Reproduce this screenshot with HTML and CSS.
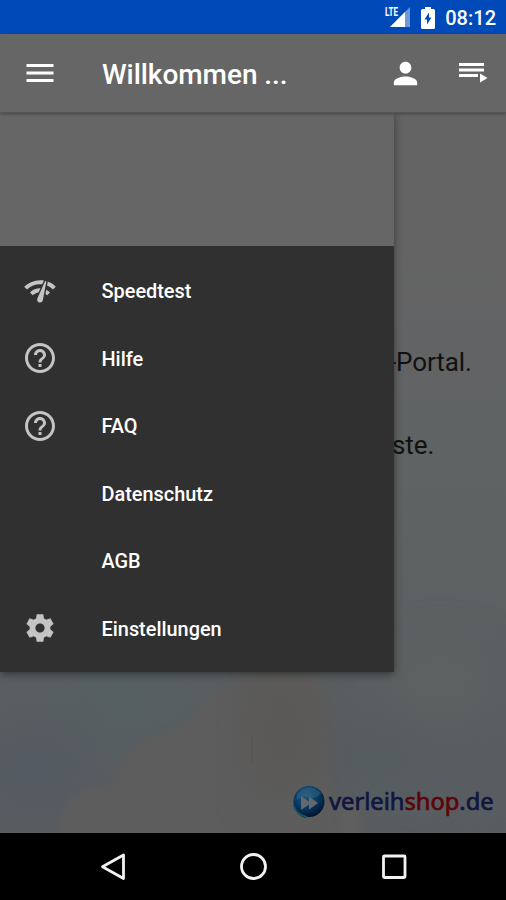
FILE: index.html
```
<!DOCTYPE html>
<html lang="de">
<head>
    <meta charset="UTF-8">
    <meta name="viewport" content="width=device-width, initial-scale=1.0">
    <title>verleihshop.de</title>
    <link rel="stylesheet" href="styles.css">
</head>
<body>
    <div class="statusbar">
        <svg class="signal" width="28" height="24" viewBox="0 0 28 24">
            <path d="M25 2v20H5z" fill="#6f98dc"/>
            <path d="M20 7v15H5z" fill="#fff"/>
            <text class="lte" x="0" y="11" textLength="13" lengthAdjust="spacingAndGlyphs">LTE</text>
        </svg>
        <svg class="battery" width="14" height="22" viewBox="0 0 14 22">
            <path d="M4 0h6v2h2.500q1.500 0 1.500 1.500v17q0 1.500-1.500 1.500h-11q-1.500 0-1.500-1.500v-17q0-1.500 1.500-1.500H4z" fill="#fff"/>
            <path d="M8 5.500v5h2.500L6 17.500v-5H3.500z" fill="#0049b9"/>
        </svg>
        <span class="clock">08:12</span>
    </div>

    <header class="appbar">
        <svg class="icon" viewBox="0 0 24 24"><path d="M3 18h18v-2H3v2zm0-5h18v-2H3v2zm0-7v2h18V6H3z"/></svg>
        <h1 class="title">Willkommen ...</h1>
        <svg class="icon account" viewBox="0 0 24 24"><path d="M12 12c2.210 0 4-1.790 4-4s-1.790-4-4-4-4 1.790-4 4 1.790 4 4 4zm0 2c-2.670 0-8 1.340-8 4v2h16v-2c0-2.660-5.330-4-8-4z"/></svg>
        <svg class="playlist" width="30" height="24" viewBox="0 0 30 24">
            <path d="M1 2h25v3H1zM1 7.500h25v3H1zM1 13h19v3H1zM22 12.500l7.500 4.500-7.500 4.500z"/>
        </svg>
    </header>

    <main class="content">
        <!-- sky with clouds -->
        <svg class="sky" viewBox="0 0 506 721" preserveAspectRatio="none">
            <defs>
                <linearGradient id="skyFill" x1="0" y1="0" x2="0" y2="1">
                    <stop offset="0.2" stop-color="#646464"/>
                    <stop offset="0.5" stop-color="#5f6364"/>
                    <stop offset="0.75" stop-color="#5a6061"/>
                    <stop offset="1" stop-color="#585d61"/>
                </linearGradient>
                <filter id="soft" x="-20%" y="-20%" width="140%" height="140%" color-interpolation-filters="sRGB"><feGaussianBlur stdDeviation="3"/></filter>
                <filter id="wide" x="-50%" y="-50%" width="200%" height="200%" color-interpolation-filters="sRGB"><feGaussianBlur stdDeviation="22"/></filter>
            </defs>
            <rect width="506" height="721" fill="url(#skyFill)"/>
            <g filter="url(#wide)">
                <ellipse cx="35" cy="655" rx="60" ry="45" fill="#555b62"/>
                <ellipse cx="125" cy="595" rx="65" ry="35" fill="#565f62"/>
                <ellipse cx="375" cy="640" rx="50" ry="30" fill="#565d5f"/>
                <ellipse cx="440" cy="570" rx="50" ry="35" fill="#5d6161"/>
                <ellipse cx="490" cy="665" rx="40" ry="45" fill="#595d61"/>
            </g>
            <g filter="url(#soft)">
                <path d="M58 735v-22l10-25 20-11 28-6 6-22 14-18 26-10 24-10 20-26 28-13 16-12h62l12 20 3 75 10 32 14 48z" fill="#5d5d5d"/>
            </g>
            <g filter="url(#wide)">
                <path d="M250 570l35-10 26 15 8 60-16 35-40 12-12-40z" fill="#5a5856"/>
            </g>
            <path d="M338 692l20-2 4 35h-18z" fill="#605f5e" filter="url(#soft)"/>
            <path d="M252 624v26" stroke="#504f4e" stroke-width="2" opacity="0.35"/>
        </svg>

        <div class="welcome">
            <p>-Portal.</p>
            <p>ste.</p>
        </div>

        <div class="brand">
            <svg width="34" height="36" viewBox="0 0 34 36">
                <defs>
                    <radialGradient id="ball" cx="0.4" cy="0.3" r="0.7">
                        <stop offset="0" stop-color="#1d557c"/>
                        <stop offset="0.55" stop-color="#073c63"/>
                        <stop offset="1" stop-color="#03152f"/>
                    </radialGradient>
                </defs>
                <path d="M4 9C-1 19 2 30 13 34l5-2L6 17z" fill="#15465c"/>
                <circle cx="17" cy="17.500" r="15.500" fill="url(#ball)"/>
                <path d="M5 10Q17-3 29 9q-5 7-13 4-6-2-11 3z" fill="#477593" opacity="0.35"/>
                <path d="M1.500 21Q4 30 15 33" fill="none" stroke="#17516a" stroke-width="1.500"/>
                <path d="M9 12l8 5.500V12.500l9 6.500-9 6.500v-5L9 26z" fill="#65696b"/>
            </svg>
            <div class="wordmark">verleih<span class="red">shop</span>.de</div>
        </div>

        <nav class="drawer">
            <div class="drawer-header"></div>
            <ul class="menu">
                <li>
                    <svg class="icon" viewBox="-0.500 -0.500 25 25"><path d="M15.900 5c-.17 0-.32.090-.41.230l-.07.150-5.180 11.650c-.16.290-.26.610-.26.960 0 1.110.9 2.010 2.010 2.010.96 0 1.770-.68 1.960-1.590l.010-.03L16.400 5.500c0-.28-.22-.5-.5-.5zM1 9l2 2c2.880-2.880 6.790-4.080 10.530-3.620l1.190-2.680C9.890 3.840 4.740 5.270 1 9zm20 2 2-2c-1.640-1.640-3.550-2.820-5.590-3.570l-.53 2.820c1.500.62 2.900 1.530 4.120 2.750zm-4 4 2-2c-.8-.8-1.700-1.420-2.660-1.890l-.55 2.920c.42.270.83.590 1.210.970zM5 13l2 2c1.130-1.130 2.560-1.790 4.030-2l1.280-2.880c-2.630-.08-5.300.87-7.310 2.880z"/></svg>
                    <span>Speedtest</span>
                </li>
                <li>
                    <svg class="icon" viewBox="0 0 24 24"><path d="M11 18h2v-2h-2v2zm1-16C6.480 2 2 6.480 2 12s4.480 10 10 10 10-4.480 10-10S17.520 2 12 2zm0 18c-4.410 0-8-3.590-8-8s3.590-8 8-8 8 3.590 8 8-3.590 8-8 8zm0-14c-2.210 0-4 1.790-4 4h2c0-1.100.9-2 2-2s2 .9 2 2c0 2-3 1.750-3 5h2c0-2.250 3-2.500 3-5 0-2.210-1.790-4-4-4z"/></svg>
                    <span>Hilfe</span>
                </li>
                <li>
                    <svg class="icon" viewBox="0 0 24 24"><path d="M11 18h2v-2h-2v2zm1-16C6.480 2 2 6.480 2 12s4.480 10 10 10 10-4.480 10-10S17.520 2 12 2zm0 18c-4.410 0-8-3.590-8-8s3.590-8 8-8 8 3.590 8 8-3.590 8-8 8zm0-14c-2.210 0-4 1.790-4 4h2c0-1.100.9-2 2-2s2 .9 2 2c0 2-3 1.750-3 5h2c0-2.250 3-2.500 3-5 0-2.210-1.790-4-4-4z"/></svg>
                    <span>FAQ</span>
                </li>
                <li>
                    <i class="icon"></i>
                    <span>Datenschutz</span>
                </li>
                <li>
                    <i class="icon"></i>
                    <span>AGB</span>
                </li>
                <li>
                    <svg class="icon" viewBox="-0.500 -0.500 25 25"><path d="M19.140 12.940c.04-.3.060-.61.060-.94 0-.32-.02-.64-.07-.94l2.030-1.580c.18-.14.230-.41.120-.61l-1.920-3.320c-.12-.22-.37-.29-.59-.22l-2.390.96c-.5-.38-1.030-.7-1.620-.94l-.36-2.540c-.04-.24-.24-.41-.48-.41h-3.840c-.24 0-.43.170-.47.410l-.36 2.540c-.59.240-1.130.570-1.620.940l-2.390-.96c-.22-.08-.47 0-.59.220L2.740 8.870c-.12.210-.08.470.12.610l2.030 1.580c-.05.300-.09.630-.09.940s.02.640.070.940l-2.030 1.580c-.18.140-.23.410-.12.610l1.920 3.320c.12.220.37.290.59.220l2.390-.96c.5.380 1.030.7 1.620.940l.36 2.540c.05.240.24.410.48.410h3.840c.24 0 .44-.17.470-.41l.36-2.540c.59-.24 1.130-.56 1.620-.94l2.390.96c.22.080.47 0 .59-.22l1.920-3.320c.12-.22.070-.47-.12-.61l-2.010-1.580zM12 15.200c-1.760 0-3.200-1.440-3.200-3.200s1.440-3.200 3.200-3.200 3.200 1.440 3.200 3.200-1.440 3.200-3.200 3.200z"/></svg>
                    <span>Einstellungen</span>
                </li>
            </ul>
        </nav>
    </main>

    <footer class="navbar">
        <svg width="28" height="30" viewBox="0 0 28 30"><path d="M23.500 3v23.500L2.500 14.700z"/></svg>
        <svg width="28" height="30" viewBox="0 0 28 30"><circle cx="13.500" cy="14.500" r="12"/></svg>
        <svg width="28" height="30" viewBox="0 0 28 30"><rect x="3.500" y="4" width="21.500" height="21.500" rx="1"/></svg>
    </footer>
</body>
</html>
```
FILE: styles.css
```
*, *::before, *::after {
    margin: 0;
    padding: 0;
    box-sizing: border-box;
}

body {
    display: flex;
    flex-direction: column;
    height: 900px;
    overflow: hidden;
    background-color: #000;
    color: #fff;
    font-family: Roboto, sans-serif;
}

svg {
    display: block;
    flex-shrink: 0;
}

.statusbar {
    display: flex;
    align-items: center;
    justify-content: flex-end;
    height: 34px;
    padding: 0 10px 0 0;
    background-color: #0049b9;
}

.signal {
    margin-right: 8px;
}

.lte {
    font-size: 12px;
    font-weight: 700;
    fill: #fff;
    stroke: #0049b9;
    stroke-width: 2px;
    paint-order: stroke;
}

.battery {
    margin-right: 10px;
    margin-top: 2px;
}

.clock {
    font-size: 20px;
    font-weight: 500;
    line-height: 34px;
    padding-top: 2px;
}

.appbar {
    position: relative;
    z-index: 2;
    display: flex;
    align-items: center;
    height: 79px;
    padding: 0 18px 0 22px;
    background-color: #666;
    border-bottom: 1px solid #555;
    box-shadow: 0 1px 3px rgba(0, 0, 0, 0.3);
}

.icon {
    width: 36px;
    height: 36px;
    fill: currentColor;
}

.title {
    flex: 1;
    margin-left: 44px;
    font-size: 28px;
    font-weight: 500;
    letter-spacing: -0.05px;
    padding-top: 3px;
}

.account {
    width: 35px;
    height: 35px;
    margin-right: 35px;
}

.playlist {
    fill: #fff;
}

.content {
    position: relative;
    display: flex;
    flex-direction: column;
    height: 720px;
    overflow: hidden;
    background-color: #646464;
}

.sky {
    position: absolute;
    inset: 0;
    width: 100%;
    height: 100%;
}

.welcome {
    position: relative;
    padding: 228px 0 0 389px;
    color: #111;
    font-size: 26px;
    letter-spacing: -0.1px;
    line-height: 42px;
}

.welcome p + p {
    margin-top: 41px;
    padding-left: 3px;
}

.brand {
    position: relative;
    display: flex;
    align-items: center;
    justify-content: flex-end;
    margin-top: auto;
    padding: 0 11px 13px 0;
}

.wordmark {
    width: 166px;
    margin-left: 3px;
    font-family: "Noto Sans", sans-serif;
    font-size: 23.7px;
    line-height: 32px;
    padding-bottom: 2px;
    white-space: nowrap;
    color: #10163f;
    -webkit-text-stroke: 0.7px currentColor;
}

.wordmark .red {
    color: #5c0508;
}

.drawer {
    position: absolute;
    top: 0;
    left: 0;
    width: 394px;
    background-color: #303030;
    box-shadow: 0 2px 8px rgba(0, 0, 0, 0.45);
}

.drawer-header {
    height: 133px;
    background-color: #666;
}

.menu {
    list-style: none;
    padding: 11px 0 10px;
}

.menu li {
    display: flex;
    align-items: center;
    height: 67.5px;
    padding-left: 22px;
    font-size: 19.9px;
    font-weight: 500;
}

.menu span {
    padding-top: 2px;
}

.menu .icon {
    color: #c4c4c4;
    margin-right: 43.5px;
}

.navbar {
    display: flex;
    align-items: center;
    justify-content: space-between;
    height: 67px;
    padding: 0 98px 0 100px;
    background-color: #000;
}

.navbar svg {
    fill: none;
    stroke: #f2f2f2;
    stroke-width: 2.8px;
    stroke-linejoin: round;
}
```
